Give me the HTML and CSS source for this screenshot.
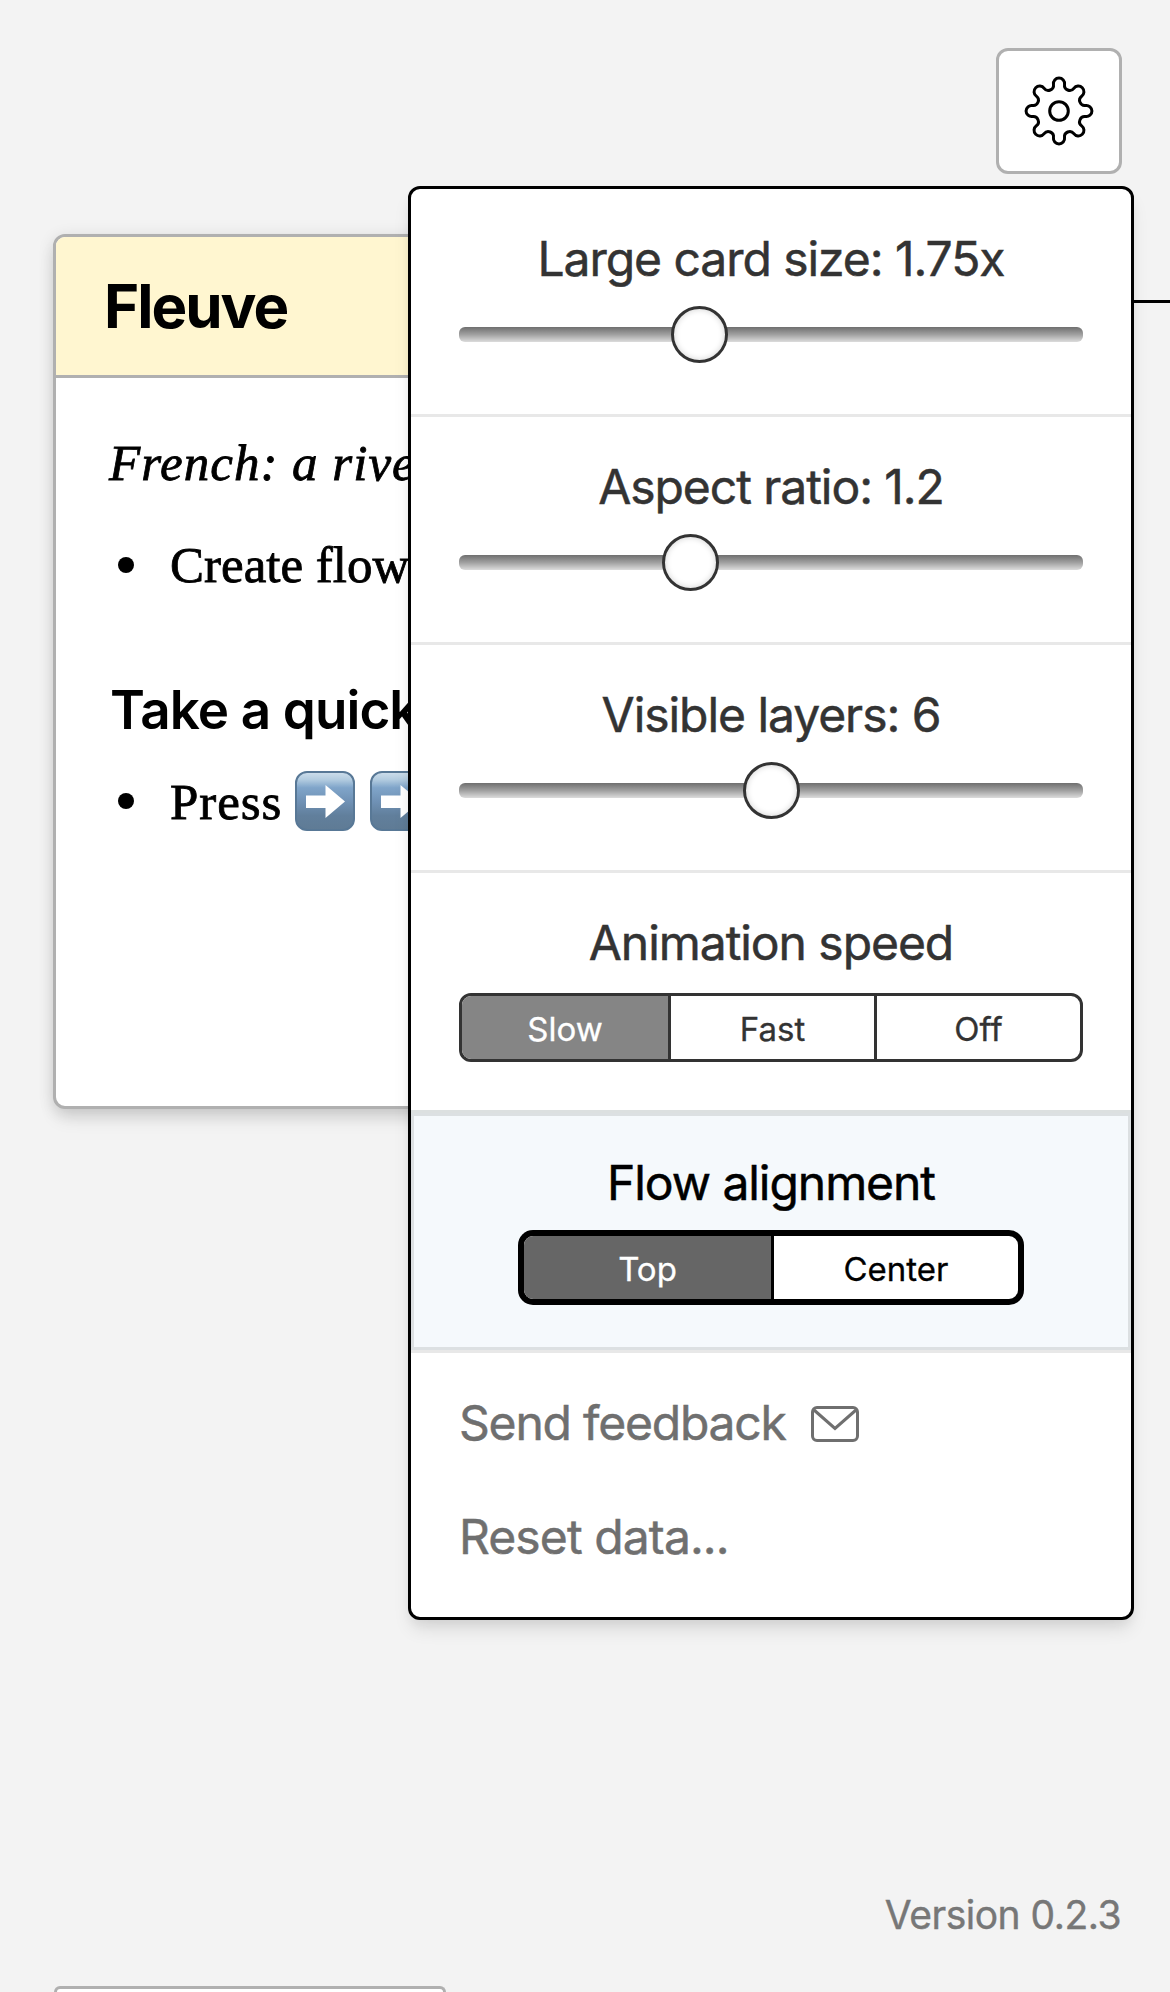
FILE: index.html
```
<!DOCTYPE html>
<html lang="en">
<head>
<meta charset="utf-8">
<title>Fleuve</title>
<link rel="stylesheet" href="styles.css">
</head>
<body>
<div class="app">
  <header class="topbar">
    <button class="gear" aria-label="Settings">
      <svg width="72" height="72" viewBox="-36 -36 72 72" fill="none" stroke="#000" stroke-width="3">
        <path d="M-5.54-26.51A5.6 5.6 0 1 1 5.54-26.51A5.2 5.2 0 0 0 14.83-22.66A5.6 5.6 0 1 1 22.66-14.83A5.2 5.2 0 0 0 26.51-5.54A5.6 5.6 0 1 1 26.51 5.54A5.2 5.2 0 0 0 22.66 14.83A5.6 5.6 0 1 1 14.83 22.66A5.2 5.2 0 0 0 5.54 26.51A5.6 5.6 0 1 1-5.54 26.51A5.2 5.2 0 0 0-14.83 22.66A5.6 5.6 0 1 1-22.66 14.83A5.2 5.2 0 0 0-26.51 5.54A5.6 5.6 0 1 1-26.51-5.54A5.2 5.2 0 0 0-22.66-14.83A5.6 5.6 0 1 1-14.83-22.66A5.2 5.2 0 0 0-5.54-26.51Z"/>
        <circle r="9.3"/>
      </svg>
    </button>
    <section class="panel">
      <div class="row">
        <div class="label">Large card size: 1.75x</div>
        <div class="slider"><span class="thumb" style="margin-left:212px"></span></div>
      </div>
      <div class="row">
        <div class="label">Aspect ratio: 1.2</div>
        <div class="slider"><span class="thumb" style="margin-left:203px"></span></div>
      </div>
      <div class="row">
        <div class="label">Visible layers: 6</div>
        <div class="slider"><span class="thumb" style="margin-left:284px"></span></div>
      </div>
      <div class="row row-speed">
        <div class="label">Animation speed</div>
        <div class="segments">
          <span class="seg on">Slow</span><span class="seg">Fast</span><span class="seg">Off</span>
        </div>
      </div>
      <div class="row row-align">
        <div class="label">Flow alignment</div>
        <div class="segments strong">
          <span class="seg on">Top</span><span class="seg">Center</span>
        </div>
      </div>
      <div class="links">
        <div class="link"><span class="send">Send feedback</span>
          <svg class="mail" width="48" height="36" viewBox="0 0 48 36" fill="none" stroke="#6f6f6f" stroke-width="3">
            <rect x="1.500" y="1.500" width="45" height="33" rx="4.500"/>
            <path d="M3 4L24 22.500L45 4"/>
          </svg>
        </div>
        <div class="link"><span class="reset">Reset data...</span></div>
      </div>
    </section>
  </header>
  <main class="flow">
    <article class="card">
      <h1>Fleuve</h1>
      <p class="lead">French: a rive</p>
      <div class="item item-1"><i class="dot"></i><span>Create flow</span></div>
      <h2>Take a quick</h2>
      <div class="item item-2"><i class="dot"></i><span class="press">Press</span>
        <svg class="key" width="60" height="60" viewBox="0 0 60 60">
          <defs>
            <linearGradient id="key" x1="0" y1="0" x2="0" y2="1">
              <stop offset="0" stop-color="#cfdfec"/><stop offset=".13" stop-color="#b3cce0"/>
              <stop offset=".27" stop-color="#80a5ca"/><stop offset=".5" stop-color="#7092b6"/>
              <stop offset=".75" stop-color="#617f9c"/><stop offset="1" stop-color="#5f7b95"/>
            </linearGradient>
          </defs>
          <rect x="1" y="1" width="58" height="58" rx="11" fill="url(#key)" stroke="#587896" stroke-width="2"/>
          <path d="M11 24.500H30.500V14L50 30.500L30.500 47V37H11Z" fill="#fff"/>
        </svg>
        <svg class="key key-next" width="60" height="60" viewBox="0 0 60 60">
          <rect x="1" y="1" width="58" height="58" rx="11" fill="url(#key)" stroke="#587896" stroke-width="2"/>
          <path d="M11 24.500H30.500V14L50 30.500L30.500 47V37H11Z" fill="#fff"/>
        </svg>
      </div>
    </article>
    <div class="connector"></div>
  </main>
  <footer class="footer">
    <div class="version">Version 0.2.3</div>
    <div class="tray"></div>
  </footer>
</div>
</body>
</html>
```

FILE: styles.css
```
* { box-sizing: border-box; }
body {
  margin: 0;
  background: #f3f3f3;
  font-family: Inter, "Liberation Sans", sans-serif;
  color: #000;
}
.app {
  width: 1170px;
  height: 1992px;
  overflow: hidden;
  display: flex;
  flex-direction: column;
}
.topbar {
  position: relative;
  display: flex;
  justify-content: flex-end;
  padding: 48px 48px 0 0;
}
.gear {
  width: 126px;
  height: 126px;
  padding: 0;
  border: 3px solid #b0b0b0;
  border-radius: 12px;
  background: #fff;
  display: grid;
  place-items: center;
}

/* Settings popover */
.panel {
  position: absolute;
  z-index: 2;
  top: 186px;
  right: 36px;
  width: 726px;
  height: 1434px;
  border: 3px solid #000;
  border-radius: 12px;
  background: #fff;
  box-shadow: 0 12px 18px -3px rgba(0,0,0,.1), 0 6px 12px -3px rgba(0,0,0,.06);
  overflow: hidden;
}
.row {
  height: 228px;
  padding: 34px 48px 0;
  border-bottom: 3px solid #e8e8e8;
  color: #333;
}
.label {
  font-size: 48px;
  line-height: 72px;
  letter-spacing: -1.05px;
  text-align: center;
  white-space: nowrap;
  -webkit-text-stroke: .5px currentColor;
}
.slider {
  display: flex;
  align-items: center;
  height: 15px;
  margin-top: 32px;
  border-radius: 6px;
  background: linear-gradient(#6f6f6f, #a0a0a0 50%, #dcdcdc);
}
.thumb {
  flex: none;
  width: 57px;
  height: 57px;
  border: 3px solid #333;
  border-radius: 50%;
  background: #fff;
  box-shadow: inset 0 0 6px rgba(0,0,0,.18);
}
.row-speed {
  height: 240px;
  border-bottom-color: #dce0e0;
}
.segments {
  display: grid;
  grid-auto-flow: column;
  grid-auto-columns: 1fr;
  height: 69px;
  margin-top: 14px;
  border: 3px solid #333;
  border-radius: 12px;
  overflow: hidden;
  background: #fff;
}
.seg {
  display: grid;
  place-items: center;
  padding-top: 2px;
  font-size: 33px;
  border-left: 3px solid #333;
  -webkit-text-stroke: .3px currentColor;
}
.seg:first-child { border-left: 0; }
.seg.on { background: #858585; color: #fff; }
.row-align {
  height: 240px;
  background: #f5f9fc;
  box-shadow: inset 0 0 0 3px #dce0e2;
  color: #000;
}
.segments.strong {
  width: 500px;
  margin: 14px auto 0;
  border-color: #000;
  box-shadow: 0 0 0 3px #000;
}
.strong .seg { border-color: #000; }
.strong .seg.on { background: #666; }
.links {
  padding: 33px 48px 0;
  font-size: 48px;
  color: #6f6f6f;
  -webkit-text-stroke: .5px currentColor;
}
.link {
  display: flex;
  align-items: center;
  gap: 25px;
  height: 72px;
  margin-bottom: 42px;
  white-space: nowrap;
}
.send { letter-spacing: -1.2px; }
.reset { letter-spacing: -.9px; }
.mail { margin-top: 4px; }

/* Card on the flow */
.flow {
  display: flex;
  padding: 60px 0 0 53px;
}
.card {
  width: 1020px;
  height: 875px;
  border: 3px solid #b0b0b0;
  border-radius: 12px;
  background: #fff;
  box-shadow: 0 12px 18px -3px rgba(0,0,0,.1), 0 3px 16px rgba(0,0,0,.12);
  font-family: "Liberation Serif", serif;
  white-space: nowrap;
}
h1, h2, p { margin: 0; }
h1 {
  height: 141px;
  padding-left: 48px;
  border-bottom: 3px solid #b0b0b0;
  border-radius: 9px 9px 0 0;
  background: #fff6d0;
  font: 700 60px/138px Inter, sans-serif;
  letter-spacing: -2px;
}
.lead {
  padding: 49px 0 0 53px;
  font-size: 51px;
  font-style: italic;
  line-height: 72px;
  letter-spacing: 1px;
  -webkit-text-stroke: .8px currentColor;
}
.item {
  display: flex;
  align-items: center;
  height: 72px;
  padding-left: 62px;
  font-size: 51px;
  -webkit-text-stroke: .8px currentColor;
}
.item-1 { margin-top: 30px; }
.dot {
  width: 16px;
  height: 16px;
  margin-right: 36px;
  border-radius: 50%;
  background: #000;
}
h2 {
  margin-top: 73px;
  padding-left: 54px;
  font: 600 53px/72px Inter, sans-serif;
  letter-spacing: -.9px;
}
.item-2 { margin-top: 19px; }
.press {
  padding-top: 2px;
  letter-spacing: .9px;
}
.key {
  margin-left: 13px;
  -webkit-text-stroke: 0;
}
.key-next { margin-left: 15px; }
.connector {
  flex: 1;
  height: 3px;
  margin-top: 66px;
  background: #000;
}

.footer {
  flex: 1;
  display: flex;
  flex-direction: column;
  justify-content: space-between;
  padding-top: 782px;
}
.version {
  padding-right: 49px;
  text-align: right;
  font-size: 39px;
  line-height: 48px;
  letter-spacing: -.5px;
  color: #777;
  -webkit-text-stroke: .4px currentColor;
}
.tray {
  width: 392px;
  height: 6px;
  margin-left: 54px;
  border: 3px solid #b0b0b0;
  border-bottom: 0;
  border-radius: 12px 12px 0 0;
  background: #fff;
}
```
